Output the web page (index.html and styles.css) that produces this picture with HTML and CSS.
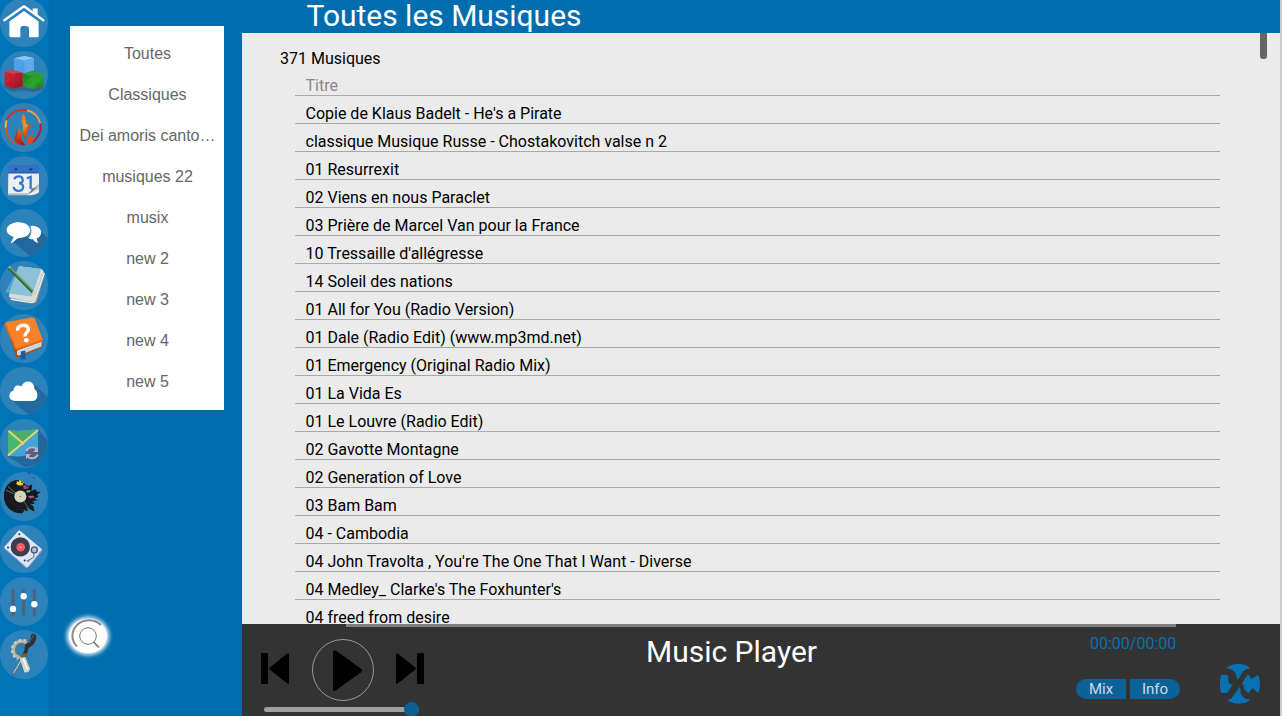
FILE: index.html
```html
<!DOCTYPE html>
<html lang="fr">
<head>
<meta charset="utf-8">
<title>Music Player</title>
<link rel="stylesheet" href="styles.css">
</head>
<body>
<div class="app">
  <nav class="rail">
    <svg class="app-icon" viewBox="0 -5 144 144"><path d="M13 61L72 19 130 61" fill="none" stroke="#fff" stroke-width="7" stroke-linecap="round" stroke-linejoin="round"/><path d="M98 26h15v20L98 34zM28 65L72 33l44 32v43q0 4-4 4H87V87q0-9-10-9H69q-8 0-8 9v25H33q-5 0-5-5z" fill="#fff"/></svg>
    <svg class="app-icon" viewBox="0 153 144 144"><defs><linearGradient id="red" x2="1" y2="1"><stop stop-color="#d52836"/><stop offset="1" stop-color="#9b1021"/></linearGradient><linearGradient id="green" x2="1" y2="1"><stop stop-color="#107c20"/><stop offset=".6" stop-color="#29a52c"/><stop offset="1" stop-color="#13751c"/></linearGradient><filter id="soft"><feGaussianBlur stdDeviation="3"/></filter></defs><path d="M13 257l24 12 31-5 33 7 29-9" fill="none" stroke="#355471" stroke-width="7" filter="url(#soft)"/><path d="M14 214l28-6 26 8v43l-28 6-26-9z" fill="url(#red)"/><path d="M14 214l28-6 26 8-28 5z" fill="#ce4256"/><path d="M40 221v43M14 250l26-28 26 35" stroke="#e34e5a" stroke-opacity=".5" fill="none"/><path d="M69 221l31-8 30 7v38l-29 8-32-9z" fill="url(#green)"/><path d="M69 221l31-8 30 7-29 9z" fill="#37983d"/><path d="M101 229v36M70 255l31-25 28 24" stroke="#6fd16a" stroke-opacity=".6" fill="none"/><path d="M42 174l31-7 29 6v37l-29 9-31-9z" fill="#4ca0e6"/><path d="M42 174l31-7 29 6-29 8z" fill="#8bc8f5"/><path d="M73 181l29-8v37l-29 8z" fill="#5ba9e8"/><path d="M43 209l30-27 28 27" stroke="#b0dcfa" stroke-opacity=".5" fill="none"/></svg>
    <svg class="app-icon" viewBox="0 311 144 144"><defs><linearGradient id="fire" x1=".5" x2=".5" y2="1"><stop stop-color="#ff6419"/><stop offset=".4" stop-color="#ff941b"/><stop offset=".65" stop-color="#f04a13"/><stop offset="1" stop-color="#9c1a22"/></linearGradient></defs><g fill="none" stroke-width="5.500"><path d="M43 428a53 53 0 0 1-26-44" stroke="#d9501e"/><path d="M17 384a53 53 0 0 1 3-22" stroke="#ffb33a"/><path d="M20 362a53 53 0 0 1 61-30" stroke="#d3301f"/><path d="M81 332a53 53 0 0 1 40 40" stroke="#f5a040"/><path d="M121 372a53 53 0 0 1-25 56" stroke="#b3202b"/></g><path d="M70 341c10 12 5 22 9 32 2 4 5 3 7-2 1 10-3 16-6 23-4 10-4 20 1 27l-8-5c-6-6-3-15-1-22-6 5-10 13-8 21 2 7 6 12 12 22-17 1-27-8-27-21-1-12 7-18 8-30 6 5 4 12 4 17 10-10 9-20 6-31-3-12-3-20 3-31z" fill="url(#fire)"/><path d="M51 390c5 12-5 20 0 31 3 7 10 12 17 15-15 1-25-8-24-21 1-9 7-14 7-25z" fill="#c92a1b"/><path d="M89 365c5 12 0 17-5 27-4 10-3 20 2 22 5 1 8-9 12-20 2 10-5 16 0 23 3-1 5-4 7-8 0 14-9 21-25 27 5-7 5-12 2-19-7-16-3-31 7-52z" fill="#e54a15"/></svg>
    <svg class="app-icon" viewBox="0 19 144 144"><path d="M25 67h92v61q-15 10-35 7H24z" fill="#edf0f2"/><path d="M24 130h59v6H24z" fill="#b7bcc5"/><path d="M30 45h82q4 0 4 5v19H25V50q0-5 5-5z" fill="#3070c8"/><path d="M24 67h93v4H24z" fill="#245ba6"/><g fill="#263d5b"><circle cx="48" cy="58" r="4"/><circle cx="92" cy="58" r="4"/></g><path d="M43 88c3-11 24-12 25 1 1 7-5 11-11 11 18 0 15 23 0 23-9 0-15-3-16-12M80 85l12-4v36" stroke="#3477d2" stroke-width="7" fill="none"/><path d="M82 134q14-11 12-19 13 1 23-15v17z" fill="#c5c7ca"/><path d="M82 134q14-11 12-19 13 1 23-15-17 29-35 34z" fill="#777d84"/></svg>
    <svg class="app-icon" viewBox="0 177 144 144"><path d="M37 272l17-19 70-9 18 18q-5 42-50 57z" fill="#23689d"/><path d="M106 228c24 5 21 33 4 36l4 14c-5-1-12-4-15-11-7 0-10-2-14-4 10-9 11-22 6-35q6-3 15 0z" fill="#fff"/><path d="M56 216c45 0 47 47 0 47-9 3-14 13-24 16l9-19c-37-13-21-44 15-44z" fill="#fff"/><path d="M86 226c12 15 5 28-7 34" fill="none" stroke="#55b4c8" stroke-width="3"/></svg>
    <svg class="app-icon" viewBox="0 335 144 144"><path d="M31 447l70 14q6 0 9-6l24-82q1-10-7-15l-66 54z" fill="#aaa9a3"/><path d="M57 350l66 8q8 1 7 10l-29 83q-3 6-10 5l-61-12q-5-2-3-8z" fill="#d3dde0"/><path d="M57 350l66 8-28 83-66-9z" fill="#8dbdd0"/><path d="M57 350l-41 78 78 13 29-83z" fill="#8cc5dc" fill-opacity=".5"/><path d="M32 449l62 10q7 0 10-7l29-82" fill="none" stroke="#f1f0e9" stroke-width="4"/><path d="M27 355l71 72" stroke="#315d38" stroke-width="9"/><path d="M28 352l72 73" stroke="#64a75d" stroke-width="5"/><path d="M95 431l11 2-5-11z" fill="#e3c99b"/><path d="M24 350l8 1-4 6z" fill="#c4d3be"/></svg>
    <svg class="app-icon" viewBox="0 13 144 144"><path d="M15 39l33 99q2 7 9 4l70-31V95L49 111z" fill="#a84a12"/><path d="M52 122l73-27-1 15-68 27q-8-2-4-15z" fill="#d7dee4"/><path d="M52 128l71-26M52 133l70-25" stroke="#98a0aa" stroke-width="1"/><path d="M13 43q0-4 5-6l76-14q9-1 11 4l24 65-76 26q-7 1-9-5z" fill="#f98127"/><path d="M15 42l31 72q2 7 8 3l75-25" fill="none" stroke="#df6719" stroke-width="5"/><path d="M53 62c-3-15 23-22 31-9 7 12-11 14-9 27" stroke="#fff" stroke-width="10" fill="none"/><circle cx="79" cy="91" r="7" fill="#fff"/><path d="M63 125l13-3v28l-8-4-7 9z" fill="#175aa1"/></svg>
    <svg class="app-icon" viewBox="0 171 144 144"><path d="M33 268l74-42 36 35q-6 46-55 54z" fill="#226a9f"/><path d="M43 272c-20-1-19-28-2-31-1-17 16-18 23-12 8-23 40-20 39 7 14 8 12 35-4 36z" fill="#fff"/></svg>
    <svg class="app-icon" viewBox="0 329 144 144"><path d="M24 441l90-82 28 33q7 46-32 72l-33 9z" fill="#22689e"/><path d="M24 361l31 3 30-3 29-3v84l-29-4-30 3-31-2z" fill="#42a6d5"/><path d="M24 361l31 3 30-3 24-1-85 79z" fill="#49ae6c"/><path d="M24 361l31 31v18l-31 29z" fill="#40b976"/><path d="M24 438l90-77M26 364l46 40" stroke="#eed269" stroke-width="6"/><circle cx="96" cy="430" r="20" fill="#51667e"/><path d="M79 425q5-12 18-12 9 0 15 8m1 14q-5 11-18 11-10 0-15-8" stroke="#bdb2d3" stroke-width="6" fill="none"/><path d="M114 412v15H99zM78 448v-15h15z" fill="#bdb2d3"/></svg>
    <svg class="app-icon" viewBox="0 22 144 144"><path d="M57 45C27 44 10 69 12 97c2 31 27 50 55 48l7-10 9 5-1-12 13 8 8 4-3-17-10-6 14 0-5-9 14-2-10-5 12-5-4-7 11-7-13-3-2-7-13 6 3-19-12 4z" fill="#17191e"/><g stroke="#3c3e43" fill="none"><circle cx="61" cy="95" r="31"/><circle cx="61" cy="95" r="40" stroke-dasharray="75 180"/></g><path d="M18 76l27 12M24 65l25 21M71 108l19 29" stroke="#66696b" stroke-width="3"/><circle cx="61" cy="95" r="18" fill="#d6d5bb"/><circle cx="61" cy="95" r="2" fill="#585a4d"/><path d="M51 48l6 4 1-8 7 6-2 5 8-3-3 9-10 1-9-4z" fill="#ecd52d"/><path d="M69 63l12-5-3 9 10-4-4 8-13 2z" fill="#a24a80"/><path d="M80 77l12-2-4 8-9-1z" fill="#69b4a3"/><path d="M83 94l17-2 4 5-13 4z" fill="#9d5894"/><path d="M81 24l6-3 4 6zm18 12l6 3-4 3zm19 42l3 2-2 4zm14-31l4 2-4 3zm7 44l3 1-2 3z" fill="#184767"/></svg>
    <svg class="app-icon" viewBox="0 180 144 144"><path d="M12 246l42-48q4-4 8 0l64 54-43 54q-3 2-7-1z" fill="#e0e5f4"/><path d="M14 250l65 55 5 1 42-51" fill="none" stroke="#a9b5d6" stroke-width="3"/><circle cx="61" cy="245" r="29" fill="#3b3c50"/><circle cx="61" cy="245" r="21" fill="none" stroke="#48495c"/><circle cx="62" cy="246" r="13" fill="#ff5a61"/><circle cx="62" cy="246" r="2" fill="#fff"/><circle cx="103" cy="254" r="9" fill="#aebbd9" stroke="#4b5470" stroke-width="4"/><path d="M102 263l-1 13-19 12" stroke="#59617c" stroke-width="3" fill="none"/><path d="M79 286l18-8-13 14z" fill="#7c859d"/><g fill="#2f3448"><circle cx="24" cy="247" r="3"/><circle cx="58" cy="207" r="3"/><circle cx="74" cy="286" r="3"/></g></svg>
    <svg class="app-icon" viewBox="0 8 144 144"><g stroke="#4e627e" stroke-width="9" stroke-linecap="round"><path d="M39 47v74M71 47v74M103 47v74"/></g><g fill="#fff"><circle cx="39" cy="103" r="9.500"/><circle cx="71" cy="65" r="9.500"/><circle cx="103" cy="89" r="9.500"/></g></svg>
    <svg class="app-icon" viewBox="0 166 144 144"><path d="M80 204a25 25 0 1 0-22 44" fill="none" stroke="#b5b3a9" stroke-width="10"/><path d="M78 198a30 30 0 1 0-24 55" fill="none" stroke="#d0cdc2" stroke-width="7" stroke-dasharray="8 7"/><path d="M75 209a19 19 0 0 0-21 31" fill="none" stroke="#706d66" stroke-width="3"/><path d="M39 299l34-57" stroke="#696b6c" stroke-width="6"/><path d="M41 294l30-51" stroke="#d9dad7" stroke-width="3"/><path d="M75 209q14-3 18-28c5-8 15-4 16 5-1 16-13 28-23 33l-8 25-15 2 10-19z" fill="#2e3032"/><path d="M87 204l14-24" stroke="#65686a" stroke-width="3"/><path d="M58 247l15-8 17 43q-4 13-17 10z" fill="#d6d3c7"/><path d="M69 250l13 33" stroke="#fff" stroke-width="4"/><path d="M62 238l17-3 3 9-19 5z" fill="#6d6140"/></svg>
  </nav>

  <aside class="playlists">
    <ul class="playlist-list">
      <li>Toutes</li><li>Classiques</li><li>Dei amoris canto…</li><li>musiques 22</li><li>musix</li><li>new 2</li><li>new 3</li><li>new 4</li><li>new 5</li>
    </ul>
    <button class="search" aria-label="Rechercher"><svg viewBox="0 0 38 36"><path d="M8 28.500A16 15 0 0 1 32 7" fill="none" stroke="#8c8789" stroke-width="2"/><circle cx="19" cy="18" r="8.300" fill="none" stroke="#777" stroke-width="1"/><path d="M24.500 24l5.500 5.500" stroke="#777" stroke-width="1.700"/></svg></button>
  </aside>

  <main class="content">
    <h1 class="page-title">Toutes les Musiques</h1>
    <section class="library">
      <div class="tracks">
        <p class="count">371 Musiques</p>
        <ul class="track-list">
          <li class="heading">Titre</li>
          <li>Copie de Klaus Badelt - He's a Pirate</li>
          <li>classique Musique Russe - Chostakovitch valse n 2</li>
          <li>01 Resurrexit</li>
          <li>02 Viens en nous Paraclet</li>
          <li>03 Prière de Marcel Van pour la France</li>
          <li>10 Tressaille d'allégresse</li>
          <li>14 Soleil des nations</li>
          <li>01 All for You (Radio Version)</li>
          <li>01 Dale (Radio Edit) (www.mp3md.net)</li>
          <li>01 Emergency (Original Radio Mix)</li>
          <li>01 La Vida Es</li>
          <li>01 Le Louvre (Radio Edit)</li>
          <li>02 Gavotte Montagne</li>
          <li>02 Generation of Love</li>
          <li>03 Bam Bam</li>
          <li>04 - Cambodia</li>
          <li>04 John Travolta , You're The One That I Want - Diverse</li>
          <li>04 Medley_ Clarke's The Foxhunter's</li>
          <li>04 freed from desire</li>
        </ul>
      </div>
      <div class="scroll-thumb"></div>
    </section>
    <footer class="player">
      <div class="progress"></div>
      <div class="player-body">
        <div class="controls">
          <div class="buttons">
            <svg class="skip" viewBox="0 0 28 31"><rect width="7" height="31" rx="1"/><path d="M9 14.200L26 .8q2-1.500 2 1v27.500q0 2.500-2 1L9 16.800q-1.500-1.300 0-2.600z"/></svg>
            <div class="play"><svg viewBox="0 0 29 41"><path d="M0 2q0-3 3-1.200l25 18q1.800 1.700 0 3.400l-25 18Q0 42 0 39z"/></svg></div>
            <svg class="skip" viewBox="0 0 28 31"><path d="M19 14.200L2 .8Q0-.7 0 1.800v27.500q0 2.500 2 1L19 16.800q1.500-1.300 0-2.600z"/><rect x="21" width="7" height="31" rx="1"/></svg>
          </div>
          <div class="volume"><span class="knob"></span></div>
        </div>
        <h2 class="player-title">Music Player</h2>
        <div class="status">
          <span class="time">00:00/00:00</span>
          <div class="tabs"><button>Mix</button><button>Info</button></div>
        </div>
        <svg class="logo" viewBox="510 162 120 120"><path d="M532 171q35-19 66 0v5q-12-1-20 10l-11 19q-5 7-7-1-1-15-12-23-8-6-16-5zM514 194h13q9 0 8 11-1 22 13 18l-13 22q-3 5-9 4h-12q-9-27 0-55zM532 270q8 0 15-8l17-26q6-9 7 1 0 22 15 29 6 3 12 2v4q-32 20-66-2zM579 216q5-10 12-19l4-5 9 15 20-13q12 28 0 55l-17-15-11 16q-9-6-13-13-5-9 0-12-12 0-4-9z" fill="#0871b3"/></svg>
      </div>
    </footer>
  </main>
</div>
</body>
</html>
```
FILE: styles.css
```css
* { box-sizing: border-box; }
body { margin: 0; overflow: hidden; background: #ccc; font: 16px Roboto, sans-serif; }
ul, p, h1, h2 { margin: 0; padding: 0; list-style: none; font-weight: 400; }
button { border: 0; padding: 0; font: inherit; }
svg { display: block; }

.app { display: flex; width: 1280px; height: 716px; overflow: hidden; background: #006eae; }

.rail { width: 50px; flex: none; display: flex; flex-direction: column; gap: 4.180px; margin-top: -2px; background: #0074b7; border-right: 1px solid #0069a7; }
.app-icon { width: 48px; height: 48.500px; flex: none; border-radius: 50%; background: #2d82ba; }

.playlists { width: 192px; flex: none; display: flex; flex-direction: column; justify-content: space-between; padding: 26px 18px 63px 20px; }
.playlist-list { height: 384px; padding: 7px 5px 8px 6px; background: #fff; color: #666; font-family: "Liberation Sans", sans-serif; text-align: center; }
.playlist-list li { height: 41px; line-height: 41px; white-space: nowrap; }
.search { width: 38px; height: 34px; margin-left: -1px; border-radius: 50%; background: #fff; box-shadow: 0 0 4px 2px #fff; }
.search svg { width: 38px; height: 36px; margin-top: -1px; }

.content { flex: 1; min-width: 0; display: flex; flex-direction: column; }
.page-title { height: 33px; flex: none; padding-left: 64.500px; color: #fff; font-size: 30px; line-height: 32px; letter-spacing: -.02px; }
.library { height: 591px; flex: none; display: flex; justify-content: space-between; overflow: hidden; padding-right: 13px; background: #ebebeb; }
.tracks { width: 978px; }
.count { height: 35px; padding: 16px 0 0 38px; line-height: 19px; }
.track-list { margin-left: 53px; }
.track-list li { height: 28px; padding: 8px 0 0 10.500px; border-bottom: 1px solid #a8a8a8; line-height: 19px; white-space: nowrap; }
.track-list .heading { color: #888; }
.scroll-thumb { width: 7px; height: 26px; border-radius: 0 0 3px 3px; background: #666; }

.player { height: 92px; flex: none; background: #333; }
.progress { height: 3px; margin: 0 104px; background: #808080; }
.player-body { display: flex; height: 89px; }
.controls { width: 200px; flex: none; padding: 12px 0 0 18.500px; }
.buttons { display: flex; align-items: center; height: 62px; }
.skip { width: 28px; height: 31px; margin-top: -4px; }
.play { display: flex; align-items: center; justify-content: flex-start; width: 62px; height: 62px; margin: 0 22px 0 23.500px; padding-left: 20px; border: 1px solid #999; border-radius: 50%; }
.play svg { width: 29px; height: 41px; }
.volume { display: flex; align-items: center; justify-content: flex-end; width: 155px; height: 5px; margin: 6px 0 0 3.500px; border-radius: 3px; background: #a0a0a0; }
.knob { width: 15px; height: 15px; border-radius: 50%; background: #0c5f91; }
.player-title { width: 579px; flex: none; padding: 7px 0 0; color: #fff; font-size: 30px; line-height: 36px; text-align: center; }
.status { width: 159px; flex: none; padding: 7px 0 0 55px; color: #0871b3; }
.time { display: block; margin-left: 14px; line-height: 19px; }
.tabs { display: flex; gap: 4px; margin-top: 26px; }
.tabs button { width: 50px; flex: none; height: 20px; color: #cfdbe3; background: #0a6298; font-size: 15px; line-height: 20px; }
.tabs button:first-child { border-radius: 10px 0 0 10px; }
.tabs button:last-child { border-radius: 0 10px 10px 0; }
.logo { width: 40px; height: 40px; flex: none; margin: 37px 0 0 40px; }
```
